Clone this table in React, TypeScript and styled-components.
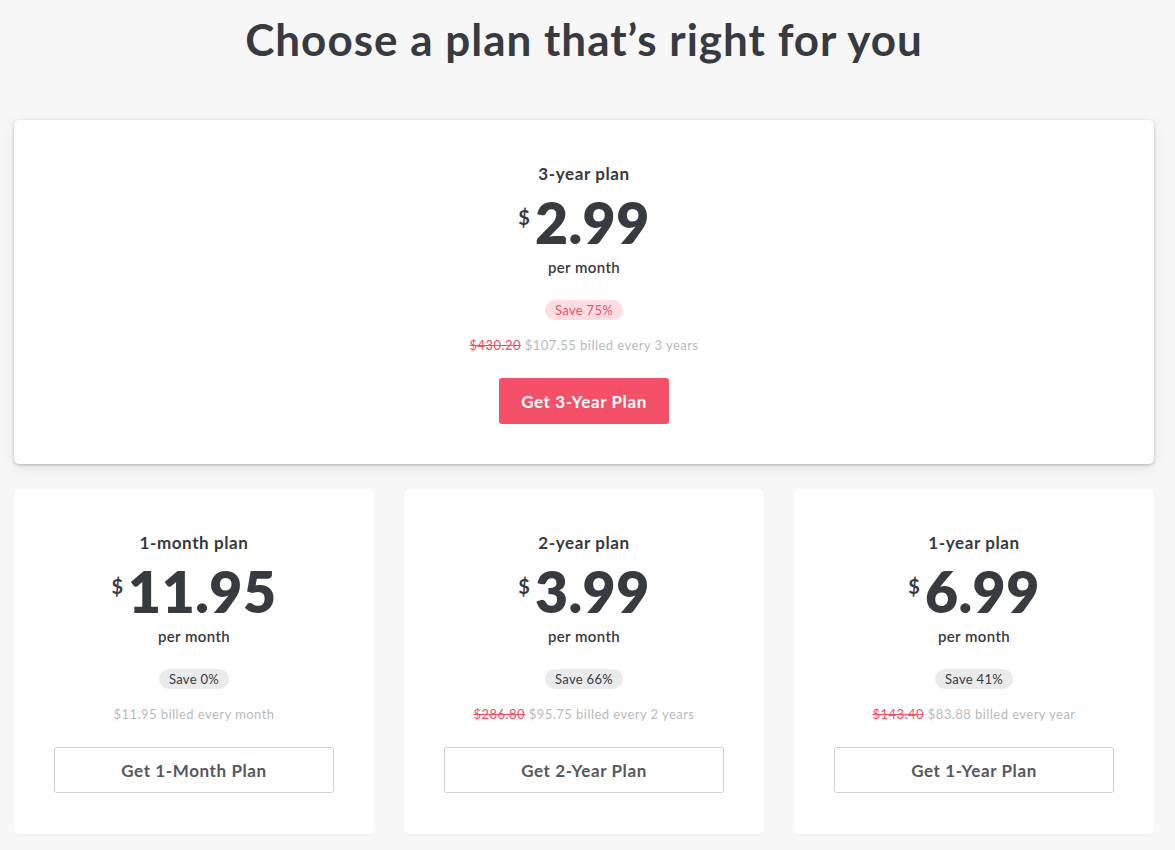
import React from "react";
import styled, { createGlobalStyle } from "styled-components";

const Global = createGlobalStyle`
  html, body { margin: 0; padding: 0; background: #f7f7f7; }
  body { font-family: "Lato", "Noto Sans", sans-serif; color: #373a40; }
`;

const Page = styled.div`
  width: 1175px;
  min-height: 850px;
  box-sizing: border-box;
  padding: 14px 21px 0 14px;
`;

const Title = styled.h1`
  margin: 0;
  text-align: center;
  font-size: 44px;
  line-height: 50px;
  font-weight: 700;
  letter-spacing: 1px;
  color: #373a40;
`;

const Featured = styled.div`
  margin-top: 56px;
`;

const Row = styled.div`
  margin-top: 25px;
  display: grid;
  grid-template-columns: repeat(3, 360px);
  column-gap: 30px;
`;

const Card = styled.div<{ $featured?: boolean }>`
  background: #fff;
  border-radius: 5px;
  box-sizing: border-box;
  height: ${(p) => (p.$featured ? "344px" : "345px")};
  padding-top: 44px;
  display: flex;
  flex-direction: column;
  align-items: center;
  box-shadow: ${(p) =>
    p.$featured
      ? "0 1px 3px rgba(0,0,0,0.25), 0 4px 14px rgba(0,0,0,0.08)"
      : "0 1px 2px rgba(0,0,0,0.03)"};
`;

const PlanName = styled.div`
  font-size: 17px;
  line-height: 20px;
  font-weight: 700;
  letter-spacing: 0.6px;
`;

const PriceRow = styled.div`
  display: flex;
  align-items: flex-start;
  margin-top: 10px;
  height: 56px;
`;

const Currency = styled.span`
  font-size: 20px;
  font-weight: 700;
  line-height: 20px;
  margin-top: 13px;
  margin-right: 5px;
`;

const Amount = styled.span`
  font-size: 57px;
  line-height: 56px;
  font-weight: 800;
  letter-spacing: 0.5px;
`;

const PerMonth = styled.div`
  margin-top: 8px;
  font-size: 15px;
  line-height: 18px;
  font-weight: 600;
  letter-spacing: 0.4px;
`;

const Badge = styled.div<{ $hot?: boolean }>`
  margin-top: 24px;
  height: 20px;
  line-height: 20px;
  padding: 0 10px;
  border-radius: 10px;
  font-size: 13px;
  letter-spacing: 0.3px;
  background: ${(p) => (p.$hot ? "#fddde1" : "#e9eaec")};
  color: ${(p) => (p.$hot ? "#f04f65" : "#373a40")};
`;

const Billing = styled.div`
  margin-top: 17px;
  font-size: 13px;
  line-height: 16px;
  letter-spacing: 0.45px;
  color: #b9babd;
`;

const Strike = styled.s`
  color: #f04f65;
`;

const Button = styled.button<{ $primary?: boolean }>`
  margin-top: 25px;
  height: 46px;
  width: ${(p) => (p.$primary ? "170px" : "280px")};
  border-radius: 3px;
  font-family: inherit;
  font-size: 17px;
  font-weight: 700;
  letter-spacing: 0.6px;
  cursor: pointer;
  border: ${(p) => (p.$primary ? "none" : "1px solid #cfd0d2")};
  background: ${(p) => (p.$primary ? "#f45068" : "#fff")};
  color: ${(p) => (p.$primary ? "#fff" : "#55585d")};
`;

type Plan = {
  name: string;
  price: string;
  save: string;
  old?: string;
  billed: string;
  cta: string;
};

const plans: Plan[] = [
  { name: "1-month plan", price: "11.95", save: "Save 0%", billed: "$11.95 billed every month", cta: "Get 1-Month Plan" },
  { name: "2-year plan", price: "3.99", save: "Save 66%", old: "$286.80", billed: "$95.75 billed every 2 years", cta: "Get 2-Year Plan" },
  { name: "1-year plan", price: "6.99", save: "Save 41%", old: "$143.40", billed: "$83.88 billed every year", cta: "Get 1-Year Plan" },
];

function PlanCard({ plan, featured }: { plan: Plan; featured?: boolean }) {
  return (
    <Card $featured={featured}>
      <PlanName>{plan.name}</PlanName>
      <PriceRow>
        <Currency>$</Currency>
        <Amount>{plan.price}</Amount>
      </PriceRow>
      <PerMonth>per month</PerMonth>
      <Badge $hot={featured}>{plan.save}</Badge>
      <Billing>
        {plan.old && <Strike>{plan.old}</Strike>}
        {plan.old ? " " : ""}
        {plan.billed}
      </Billing>
      <Button $primary={featured}>{plan.cta}</Button>
    </Card>
  );
}

export default function App() {
  const featured: Plan = {
    name: "3-year plan",
    price: "2.99",
    save: "Save 75%",
    old: "$430.20",
    billed: "$107.55 billed every 3 years",
    cta: "Get 3-Year Plan",
  };
  return (
    <>
      <Global />
      <Page>
        <Title>Choose a plan that’s right for you</Title>
        <Featured>
          <PlanCard plan={featured} featured />
        </Featured>
        <Row>
          {plans.map((p) => (
            <PlanCard key={p.name} plan={p} />
          ))}
        </Row>
      </Page>
    </>
  );
}
